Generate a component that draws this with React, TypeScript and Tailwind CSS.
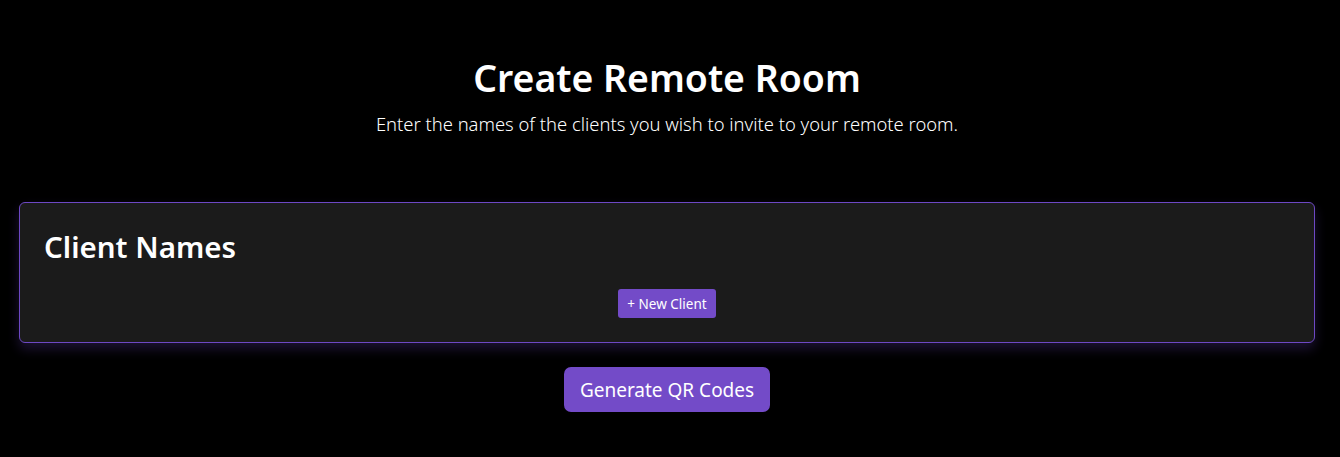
export default function App() {
  return (
    <div className="min-h-[457px] w-full bg-black text-white" style={{ fontFamily: '"Noto Sans", "Open Sans", sans-serif' }}>
      <div className="w-[1334px]">
        <div className="flex flex-col items-center pt-[52px]">
          <h1 className="text-[37.4px] font-semibold leading-[52px]">Create Remote Room</h1>
          <p className="mt-[7px] text-[18.4px] font-light leading-[26px] text-white">Enter the names of the clients you wish to invite to your remote room.</p>
        </div>
        <div className="mx-[19px] mt-[65px] h-[141px] rounded-[6px] border border-[#6d48c4] bg-[#1b1b1b] px-[24px] pt-[24px] shadow-[0_6px_12px_rgba(110,72,200,0.25)]">
          <h2 className="text-[29.5px] font-semibold leading-[40px]">Client Names</h2>
          <div className="mt-[22px] flex justify-center">
            <button className="h-[29px] rounded-[3px] bg-[#734bc8] px-[9px] text-[13.5px] leading-[30px] text-white">+ New Client</button>
          </div>
        </div>
        <div className="mt-[24px] flex justify-center">
          <button className="h-[45px] rounded-[7px] bg-[#734bc8] px-[16px] text-[19px] leading-[46px] text-white">Generate QR Codes</button>
        </div>
      </div>
    </div>
  );
}
